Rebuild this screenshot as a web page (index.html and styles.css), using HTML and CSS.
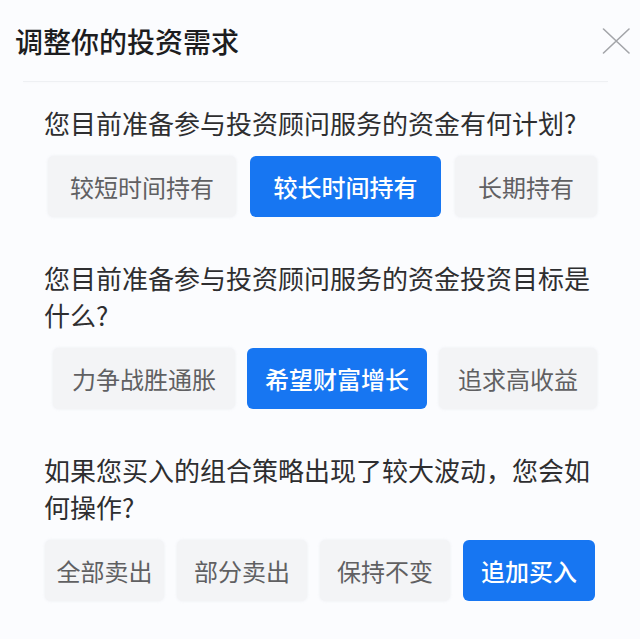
FILE: index.html
```html
<!DOCTYPE html>
<html lang="zh-CN">
<head>
<meta charset="utf-8">
<title>调整你的投资需求</title>
<link rel="stylesheet" href="styles.css">
</head>
<body>
<div class="sheet">
  <header class="sheet-header">
    <h1 class="sheet-title">调整你的投资需求</h1>
    <button class="close-btn" aria-label="关闭">
      <svg width="28" height="26" viewBox="0 0 28 26" fill="none">
        <path d="M1.5 1 L27 25 M27 1 L1.5 25" stroke="#a3a5a9" stroke-width="1.6" stroke-linecap="round"/>
      </svg>
    </button>
  </header>
  <div class="divider"></div>
  <main class="sheet-body">
    <section class="question">
      <p class="question-text">您目前准备参与投资顾问服务的资金有何计划?</p>
      <div class="options options-1">
        <span class="opt">较短时间持有</span>
        <span class="opt opt-active">较长时间持有</span>
        <span class="opt">长期持有</span>
      </div>
    </section>
    <section class="question">
      <p class="question-text">您目前准备参与投资顾问服务的资金投资目标是什么?</p>
      <div class="options options-2">
        <span class="opt">力争战胜通胀</span>
        <span class="opt opt-active">希望财富增长</span>
        <span class="opt">追求高收益</span>
      </div>
    </section>
    <section class="question">
      <p class="question-text">如果您买入的组合策略出现了较大波动，您会如何操作?</p>
      <div class="options options-3">
        <span class="opt">全部卖出</span>
        <span class="opt">部分卖出</span>
        <span class="opt">保持不变</span>
        <span class="opt opt-active">追加买入</span>
      </div>
    </section>
  </main>
</div>
</body>
</html>
```

FILE: styles.css
```css
* {
  box-sizing: border-box;
}

html, body {
  margin: 0;
  padding: 0;
}

body {
  background: #fbfcfe;
  font-family: "Noto Sans CJK SC", "Noto Sans", sans-serif;
  color: #2f2f31;
  width: 640px;
  height: 639px;
  overflow: hidden;
}

.sheet {
  width: 640px;
  height: 639px;
  background: #fbfcfe;
}

.sheet-header {
  height: 81px;
  display: flex;
  align-items: center;
  justify-content: space-between;
  padding: 0 10px 0 15px;
}

.sheet-title {
  margin: 0;
  font-size: 28px;
  line-height: 40px;
  font-weight: 500;
  color: #1d1d1f;
}

.close-btn {
  border: 0;
  padding: 0;
  margin: 0;
  background: transparent;
  display: flex;
  width: 28px;
  height: 26px;
}

.divider {
  height: 1px;
  margin: 0 32px 0 23px;
  background: #eef0f3;
  box-shadow: 0 1px 3px rgba(30, 40, 60, 0.03);
}

.sheet-body {
  padding: 22px 43px 0 44px;
  display: flex;
  flex-direction: column;
  gap: 42px;
}

.question-text {
  margin: 0 0 15px;
  font-size: 26px;
  line-height: 37px;
  font-weight: 400;
  color: #2e2e30;
}

.options {
  display: grid;
  height: 61px;
}

.options-1 {
  grid-template-columns: 188px 191px 142px;
  column-gap: 14px;
  margin-left: 4px;
}

.options-2 {
  grid-template-columns: 182px 180px 158px;
  column-gap: 12px;
  margin-left: 9px;
}

.options-3 {
  grid-template-columns: 119px 130px 130px 132px;
  column-gap: 13px;
  margin-left: 1px;
}

.opt {
  display: flex;
  align-items: center;
  justify-content: center;
  height: 61px;
  border-radius: 6px;
  background: #f3f4f6;
  box-shadow: 0 0 3px rgba(230, 232, 236, 0.8);
  font-size: 24px;
  line-height: 30px;
  color: #606062;
  white-space: nowrap;
}

.opt-active {
  background: #1776f2;
  box-shadow: none;
  color: #ffffff;
  font-weight: 500;
}
```
